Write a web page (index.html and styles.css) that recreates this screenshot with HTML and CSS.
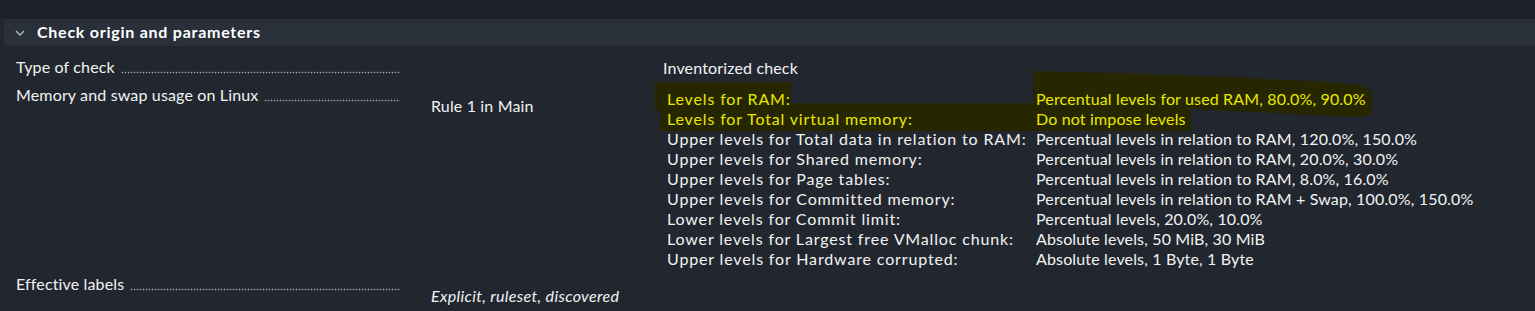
FILE: index.html
```html
<!DOCTYPE html>
<html>
<head>
<meta charset="utf-8">
<link rel="stylesheet" href="styles.css">
</head>
<body>
<div class="page">
  <svg class="marker" width="1535" height="311" viewBox="0 0 1535 311">
    <rect x="655" y="82" width="136" height="28" fill="#262600"/>
    <polygon points="659,103 1191,103 1191,131 660,131" fill="#262600"/>
    <polygon points="1033,71 1150,74 1250,78 1330,82 1360,85 1372,92 1372,114 1362,117 1250,112 1191,109 1033,109" fill="#262600"/>
  </svg>
  <div class="topbar"></div>
  <section class="section">
    <div class="header">
      <svg class="chev" width="10" height="6" viewBox="0 0 10 6"><path d="M1 1 L5 5 L9 1" fill="none" stroke="#b4b9c2" stroke-width="1.4"/></svg>
      <span class="htitle">Check origin and parameters</span>
    </div>
    <div class="rows">
      <div class="title"><span class="lbl">Type of check</span><span class="dots"></span></div>
      <div class="rule"></div>
      <div class="value v1">Inventorized check</div>

      <div class="title"><span class="lbl">Memory and swap usage on Linux</span><span class="dots"></span></div>
      <div class="rule r2">Rule 1 in Main</div>
      <div class="value v2">
        <div class="params">
          <span class="k hl">Levels for RAM:</span><span class="hl">Percentual levels for used RAM, 80.0%, 90.0%</span>
          <span class="k hl">Levels for Total virtual memory:</span><span class="hl">Do not impose levels</span>
          <span class="k">Upper levels for Total data in relation to RAM:</span><span>Percentual levels in relation to RAM, 120.0%, 150.0%</span>
          <span class="k">Upper levels for Shared memory:</span><span>Percentual levels in relation to RAM, 20.0%, 30.0%</span>
          <span class="k">Upper levels for Page tables:</span><span>Percentual levels in relation to RAM, 8.0%, 16.0%</span>
          <span class="k">Upper levels for Committed memory:</span><span>Percentual levels in relation to RAM + Swap, 100.0%, 150.0%</span>
          <span class="k">Lower levels for Commit limit:</span><span>Percentual levels, 20.0%, 10.0%</span>
          <span class="k">Lower levels for Largest free VMalloc chunk:</span><span>Absolute levels, 50 MiB, 30 MiB</span>
          <span class="k">Upper levels for Hardware corrupted:</span><span>Absolute levels, 1 Byte, 1 Byte</span>
        </div>
      </div>

      <div class="title"><span class="lbl">Effective labels</span><span class="dots"></span></div>
      <div class="rule r3"><i>Explicit, ruleset, discovered</i></div>
      <div class="value"></div>
    </div>
  </section>
</div>
</body>
</html>
```

FILE: styles.css
```css
html, body {
  margin: 0;
  padding: 0;
}
body {
  background: #22272f;
  color: #f2f2f2;
  font-family: Lato, "Open Sans", sans-serif;
  font-size: 16px;
  letter-spacing: 0.15px;
  width: 1535px;
  height: 311px;
  overflow: hidden;
}
.page {
  position: relative;
  height: 311px;
}
.marker {
  position: absolute;
  top: 0;
  left: 0;
  z-index: 0;
}
.topbar {
  height: 19px;
  background: #1e2129;
}
.section {
  position: relative;
  z-index: 1;
  margin-left: 4px;
}
.header {
  height: 27px;
  background: #29303a;
  border-top-left-radius: 3px;
  display: flex;
  align-items: center;
}
.chev {
  margin-left: 11px;
  margin-right: 12px;
}
.htitle {
  font-weight: bold;
  font-size: 16px;
  letter-spacing: 0.75px;
  color: #ffffff;
  position: relative;
  top: -1px;
}
.rows {
  display: grid;
  grid-template-columns: 384px 263px 1fr;
  padding-left: 12px;
  padding-top: 7px;
  line-height: 18px;
}
.title {
  display: flex;
  padding: 5px 0;
  white-space: nowrap;
}
.lbl {
  flex: none;
  padding-right: 6px;
}
.dots {
  flex: 1;
  height: 18px;
  background-image: radial-gradient(circle, #a9aeb6 0.65px, transparent 1.1px);
  background-size: 3px 3px;
  background-repeat: repeat-x;
  background-position: 0 13px;
}
.rule {
  padding-left: 31px;
  white-space: nowrap;
}
.rule i {
  letter-spacing: 0.35px;
}
.r2 {
  padding-top: 16px;
}
.r3 {
  padding-top: 17px;
}
.value {
  padding: 6px 0 0 0;
  white-space: nowrap;
}
.v2 {
  padding: 8px 0 1px 4px;
}
.params {
  display: grid;
  grid-template-columns: 369px auto;
  line-height: 20px;
  white-space: nowrap;
}
.k {
  letter-spacing: 0.85px;
}
.hl {
  color: #e8e800;
}
```
